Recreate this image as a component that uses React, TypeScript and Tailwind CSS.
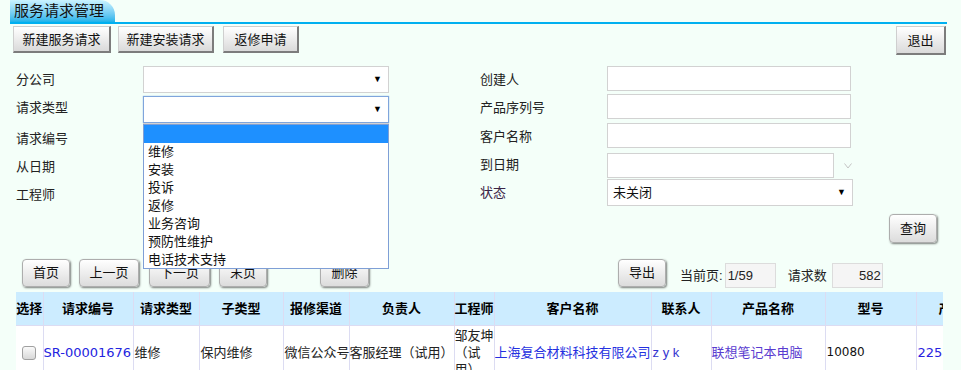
import React from 'react'

const CJK = "font-['Liberation_Sans','Noto_Sans_CJK_SC',sans-serif]"

const TOOL_BTN =
  'h-[27px] px-0 whitespace-nowrap text-[13px] leading-none text-[#111] bg-linear-to-b from-white to-[#dadada] border border-[#cfcfcf] border-r-2 border-b-2 border-r-[#7c7c7c] border-b-[#7c7c7c]'

const ROUND_BTN =
  'h-[28px] px-0 whitespace-nowrap rounded-[4px] border border-[#adadad] bg-linear-to-b from-white to-[#dcdcdc] shadow-[1px_1px_2px_rgba(0,0,0,0.5)] text-[13px] leading-none text-[#111]'

const OPTIONS = ['维修', '安装', '投诉', '返修', '业务咨询', '预防性维护', '电话技术支持']

const COLUMNS = [
  { title: '选择', w: 27 },
  { title: '请求编号', w: 90 },
  { title: '请求类型', w: 66 },
  { title: '子类型', w: 84 },
  { title: '报修渠道', w: 66 },
  { title: '负责人', w: 105 },
  { title: '工程师', w: 40 },
  { title: '客户名称', w: 157 },
  { title: '联系人', w: 60 },
  { title: '产品名称', w: 114 },
  { title: '型号', w: 91 },
  { title: '产品序列号', w: 110 },
]

function Arrow() {
  return <span className="text-[9px] leading-none text-black">▼</span>
}

function Select({ value, focused }: { value?: string; focused?: boolean }) {
  return (
    <div
      className={
        'h-[27px] flex items-center justify-between bg-white pl-[5px] pr-[6px] border ' +
        (focused ? 'border-[#7fa5dc] shadow-[0_0_1px_#7fa5dc]' : 'border-[#d2d2d2]')
      }
    >
      <span className="text-[13px] text-[#111]">{value}</span>
      <Arrow />
    </div>
  )
}

function TextBox({ w = 'w-[244px]' }: { w?: string }) {
  return <div className={'h-[25px] bg-white border border-[#d2d2d2] ' + w} />
}

export default function App() {
  return (
    <div className={'relative w-[961px] h-[370px] overflow-hidden bg-[#f4fff9] text-[#222] ' + CJK}>
      {/* Tab title */}
      <div className="ml-[10px] w-[937px] flex border-b-2 border-[#00b0f0]">
        <div className="h-[22px] w-[105px] pl-[4px] rounded-tr-[15px] bg-linear-to-b from-[#caf3ff] to-[#17b3ea] text-[15px] leading-[22px] text-[#111]">
          服务请求管理
        </div>
      </div>

      {/* Toolbar */}
      <div className="mt-[2px] flex items-start pl-[13px] pr-[15px]">
        <div className="flex gap-[7px]">
          <button className={TOOL_BTN + ' w-[98px]'}>新建服务请求</button>
          <button className={TOOL_BTN + ' w-[96px]'}>新建安装请求</button>
          <button className={TOOL_BTN + ' ml-[2px] w-[76px]'}>返修申请</button>
        </div>
        <button className={TOOL_BTN + ' ml-auto w-[50px] h-[29px]'}>退出</button>
      </div>

      {/* Search form */}
      <div className="mt-[11px] pl-[16px] grid grid-cols-[127px_246px_91px_127px_246px] text-[13px]">
        <div className="h-[28px] flex items-center">分公司</div>
        <div><Select /></div>
        <div />
        <div className="h-[28px] flex items-center">创建人</div>
        <div><TextBox /></div>

        <div className="h-[28px] flex items-center">请求类型</div>
        <div className="pt-[2px]"><Select focused /></div>
        <div />
        <div className="h-[28px] flex items-center">产品序列号</div>
        <div><TextBox /></div>

        <div className="h-[28px] flex items-center pt-[4px]">请求编号</div>
        <div><TextBox w="w-[246px]" /></div>
        <div />
        <div className="h-[28px] flex items-center">客户名称</div>
        <div><TextBox /></div>

        <div className="h-[28px] flex items-center pt-[4px]">从日期</div>
        <div><TextBox w="w-[246px]" /></div>
        <div />
        <div className="h-[28px] flex items-center">到日期</div>
        <div className="flex items-center">
          <TextBox w="w-[227px]" />
          <svg className="ml-[10px] mt-[1px]" width="8" height="6" viewBox="0 0 8 6">
            <polyline points="0.5,0.5 4,5 7.5,0.5" fill="none" stroke="#c4c4c4" strokeWidth="1" />
          </svg>
        </div>

        <div className="h-[28px] flex items-center pt-[4px]">工程师</div>
        <div><TextBox w="w-[246px]" /></div>
        <div />
        <div className="h-[28px] flex items-center text-[#3a2446]">状态</div>
        <div><Select value="未关闭" /></div>
      </div>

      {/* Query */}
      <div className="mt-[7px] flex justify-end pr-[24px]">
        <button className={ROUND_BTN + ' w-[48px] h-[29px]'}>查询</button>
      </div>

      {/* Pager */}
      <div className="mt-[14px] flex items-center pl-[22px] text-[13px]">
        <button className={ROUND_BTN + ' w-[48px]'}>首页</button>
        <button className={ROUND_BTN + ' ml-[9px] w-[60px]'}>上一页</button>
        <button className={ROUND_BTN + ' ml-[10px] w-[61px]'}>下一页</button>
        <button className={ROUND_BTN + ' ml-[9px] w-[48px]'}>末页</button>
        <button className={ROUND_BTN + ' ml-[53px] w-[49px]'}>删除</button>
        <button className={ROUND_BTN + ' ml-[249px] w-[48px]'}>导出</button>
        <span className="ml-[14px] mt-[6px]">当前页:</span>
        <div className="ml-[2px] mt-[6px] h-[25px] w-[51px] border border-[#dcdcdc] bg-[#f5f5f5] pl-[2px] leading-[23px]">1/59</div>
        <span className="ml-[12px] mt-[6px]">请求数</span>
        <div className="ml-[5px] mt-[6px] h-[25px] w-[51px] border border-[#dcdcdc] bg-[#f5f5f5] pr-[1px] text-right leading-[23px]">582</div>
      </div>

      {/* Table */}
      <div className="mt-[4px] ml-[16px] w-[927px] overflow-hidden">
        <table className="table-fixed border-collapse text-[13px]" style={{ width: COLUMNS.reduce((s, c) => s + c.w, 0) }}>
          <colgroup>
            {COLUMNS.map((c) => (
              <col key={c.title} style={{ width: c.w }} />
            ))}
          </colgroup>
          <thead>
            <tr className="h-[33px] bg-[#ccecff]">
              {COLUMNS.map((c) => (
                <th key={c.title} className="border-r border-b border-[#dcdcf2] p-0 font-bold text-black text-center whitespace-nowrap">
                  {c.title}
                </th>
              ))}
            </tr>
          </thead>
          <tbody>
            <tr className="h-[54px] bg-white align-middle">
              <td className="border-r border-[#dcdcf2] p-0 text-center">
                <span className="inline-block w-[14px] h-[14px] rounded-[3px] border border-[#a0a0a0] bg-linear-to-b from-[#fafafa] to-[#d8d8d8] align-middle" />
              </td>
              <td className="border-r border-[#dcdcf2] p-0 whitespace-nowrap font-['DejaVu_Sans',sans-serif] text-[#2424e0]">SR-00001676</td>
              <td className="border-r border-[#dcdcf2] p-0 pl-[1px]">维修</td>
              <td className="border-r border-[#dcdcf2] p-0 pl-[1px]">保内维修</td>
              <td className="border-r border-[#dcdcf2] p-0 pl-[1px] whitespace-nowrap">微信公众号</td>
              <td className="border-r border-[#dcdcf2] p-0 whitespace-nowrap">客服经理（试用）</td>
              <td className="border-r border-[#dcdcf2] p-0 leading-[17px] whitespace-nowrap">
                <div>邹友坤</div>
                <div>（试</div>
                <div>用）</div>
              </td>
              <td className="border-r border-[#dcdcf2] p-0 whitespace-nowrap text-[#2430e0]">上海复合材料科技有限公司</td>
              <td className="border-r border-[#dcdcf2] p-0 pl-[1px] tracking-[0.28em] text-[#3434d0]">zyk</td>
              <td className="border-r border-[#dcdcf2] p-0 whitespace-nowrap text-[#5a3cd0]">联想笔记本电脑</td>
              <td className="border-r border-[#dcdcf2] p-0 pl-[1px] font-['DejaVu_Sans',sans-serif] text-[12px] text-[#111]">10080</td>
              <td className="border-r border-[#dcdcf2] p-0 pl-[1px] font-['DejaVu_Sans',sans-serif] text-[#2a22e0]">22580316</td>
            </tr>
          </tbody>
        </table>
      </div>

      {/* Open dropdown list of 请求类型 */}
      <div className="absolute left-[143px] top-[124px] w-[246px] h-[145px] bg-white border border-[#7f9fd6] text-[13px] text-[#111]">
        <div className="h-[18px] bg-[#1e90ff]" />
        {OPTIONS.map((o) => (
          <div key={o} className="h-[18px] pl-[4px] leading-[18px]">
            {o}
          </div>
        ))}
      </div>
    </div>
  )
}
